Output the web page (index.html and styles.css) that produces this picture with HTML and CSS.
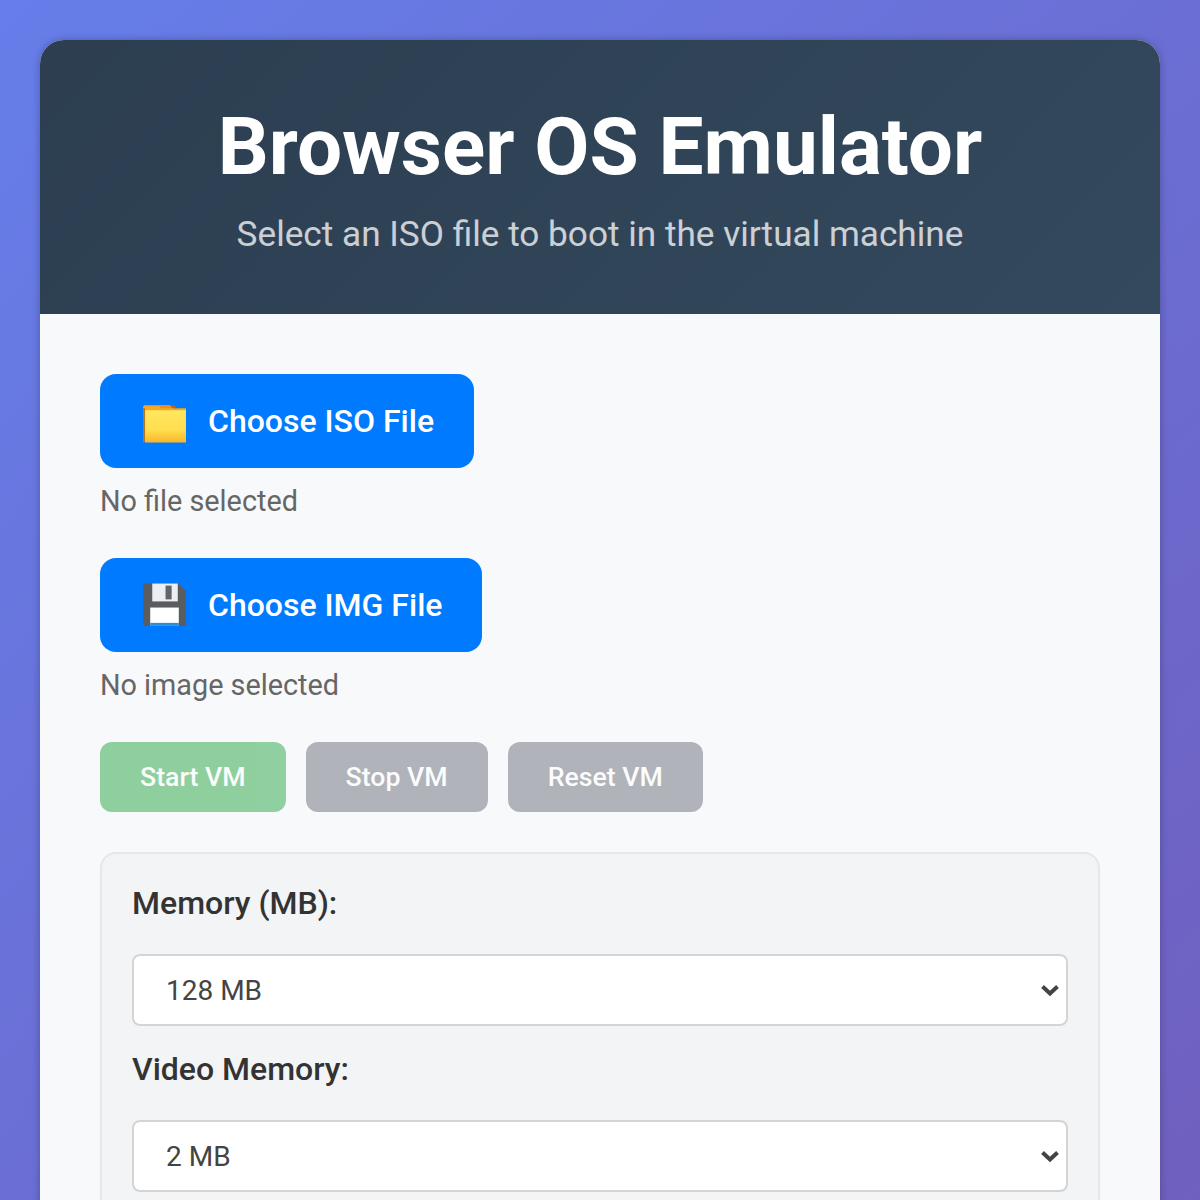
FILE: index.html
```html
<!DOCTYPE html>
<html lang="en">
<head>
    <meta charset="UTF-8">
    <meta name="viewport" content="width=device-width, initial-scale=1.0">
    <title>Browser OS Emulator</title>
    <link rel="stylesheet" href="styles.css">
</head>
<body>
    <div class="container">
        <div class="header">
            <h1>Browser OS Emulator</h1>
            <p>Select an ISO file to boot in the virtual machine</p>
        </div>

        <div class="content">
            <div class="file-section">
                <label class="file-button" for="isoFile">
                    <svg class="file-icon" viewBox="0 0 48 48">
                        <defs>
                            <linearGradient id="folderFront" x1="0" y1="0" x2="0" y2="1">
                                <stop offset="0" stop-color="#ffe75f"/>
                                <stop offset="0.6" stop-color="#ffdf50"/>
                                <stop offset="1" stop-color="#fbb52a"/>
                            </linearGradient>
                        </defs>
                        <path d="M3 10 Q3 8 5 8 H30 L33 11 H45 V44 H3 Z" fill="#f5a623"/>
                        <path d="M18 8 H29 L32 11 H21 Z" fill="#ef8b1c"/>
                        <path d="M29 8 H33 L37 11 H32 Z" fill="#a8692a"/>
                        <path d="M3 11 H5 V44 H3 Z" fill="#b5761f"/>
                        <path d="M5 13 H45 V44.5 H5 Z" fill="url(#folderFront)"/>
                    </svg>
                    <span>Choose ISO File</span>
                </label>
                <input type="file" id="isoFile" class="file-input" accept=".iso">
                <div class="file-name">No file selected</div>
            </div>

            <div class="file-section">
                <label class="file-button" for="imgFile">
                    <svg class="file-icon" viewBox="0 0 48 48">
                        <path d="M3 5 Q3 2.5 5.5 2.5 H38 L45 10 V42 Q45 44 43 44 H5 Q3 44 3 42 Z" fill="#5a5c60"/>
                        <path d="M12 2.5 H37 V20 H12 Z" fill="#eceff1"/>
                        <path d="M25 4.5 H31 V18 H25 Z" fill="#616468"/>
                        <path d="M10 26 H38 V44 H10 Z" fill="#ffffff"/>
                        <path d="M10 41 H38 V44 H10 Z" fill="#2a8fd6"/>
                    </svg>
                    <span>Choose IMG File</span>
                </label>
                <input type="file" id="imgFile" class="file-input" accept=".img">
                <div class="file-name">No image selected</div>
            </div>

            <div class="controls">
                <button class="btn btn-start" disabled>Start VM</button>
                <button class="btn btn-stop" disabled>Stop VM</button>
                <button class="btn btn-stop" disabled>Reset VM</button>
            </div>

            <div class="settings">
                <div class="setting">
                    <label for="memory">Memory (MB):</label>
                    <div class="select-wrap">
                        <select id="memory">
                            <option>128 MB</option>
                            <option>256 MB</option>
                            <option>512 MB</option>
                        </select>
                        <svg class="chevron" viewBox="0 0 20 14"><path d="M2.5 3.5 L10 10.5 L17.5 3.5" fill="none" stroke="#444" stroke-width="4"/></svg>
                    </div>
                </div>
                <div class="setting">
                    <label for="vram">Video Memory:</label>
                    <div class="select-wrap">
                        <select id="vram">
                            <option>2 MB</option>
                            <option>4 MB</option>
                            <option>8 MB</option>
                        </select>
                        <svg class="chevron" viewBox="0 0 20 14"><path d="M2.5 3.5 L10 10.5 L17.5 3.5" fill="none" stroke="#444" stroke-width="4"/></svg>
                    </div>
                </div>
            </div>
        </div>
    </div>
</body>
</html>
```

FILE: styles.css
```css
* {
    box-sizing: border-box;
}
body {
    margin: 0;
    padding: 40px;
    min-height: 2800px;
    font-family: Roboto, "Noto Sans", sans-serif;
    background: linear-gradient(135deg, #667eea 0%, #764ba2 100%);
}
.container {
    background: #f8f9fa;
    border-radius: 24px;
    overflow: hidden;
    box-shadow: 0 0 8px rgba(0,0,0,0.25);
}
.header {
    height: 274px;
    padding-top: 60px;
    text-align: center;
    color: white;
    background: linear-gradient(135deg, #2c3e50, #34495e);
}
.header h1 {
    margin: 0;
    font-size: 80px;
    line-height: 94px;
    font-weight: 700;
}
.header p {
    margin: 19px 0 0;
    font-size: 35.2px;
    line-height: 42px;
    opacity: 0.75;
}
.content {
    padding: 60px;
}
.file-section {
    margin-bottom: 40px;
}
.file-button {
    display: inline-flex;
    align-items: center;
    gap: 19px;
    height: 94px;
    padding: 0 40px;
    background: #007bff;
    color: white;
    border-radius: 16px;
    font-size: 32px;
    font-weight: 500;
    cursor: pointer;
}
.file-icon {
    width: 49px;
    height: 49px;
}
.file-input {
    display: none;
}
.file-name {
    margin-top: 16px;
    font-size: 28.8px;
    line-height: 34px;
    color: #666;
}
.controls {
    display: flex;
    gap: 20px;
    margin-bottom: 40px;
}
.btn {
    height: 70px;
    padding: 0 40px;
    border: none;
    border-radius: 12px;
    color: white;
    font-family: inherit;
    font-size: 26.7px;
    font-weight: 500;
    opacity: 0.5;
}
.btn-start {
    background: #28a745;
}
.btn-stop {
    background: #6a6f7a;
}
.settings {
    padding: 30px;
    background: #f3f4f6;
    border: 2px solid #e5e7ea;
    border-radius: 16px;
}
.setting {
    margin-bottom: 24px;
}
.setting label {
    display: block;
    margin-bottom: 32px;
    font-size: 32px;
    line-height: 38px;
    font-weight: 500;
    color: #333;
}
.select-wrap {
    position: relative;
}
.select-wrap select {
    display: block;
    width: 100%;
    height: 72px;
    padding: 0 32px;
    appearance: none;
    background: white;
    border: 2px solid #d4d4d4;
    border-radius: 8px;
    font-family: inherit;
    font-size: 28px;
    color: #444;
}
.chevron {
    position: absolute;
    right: 8px;
    top: 29px;
    width: 20px;
    height: 14px;
    pointer-events: none;
}
```
